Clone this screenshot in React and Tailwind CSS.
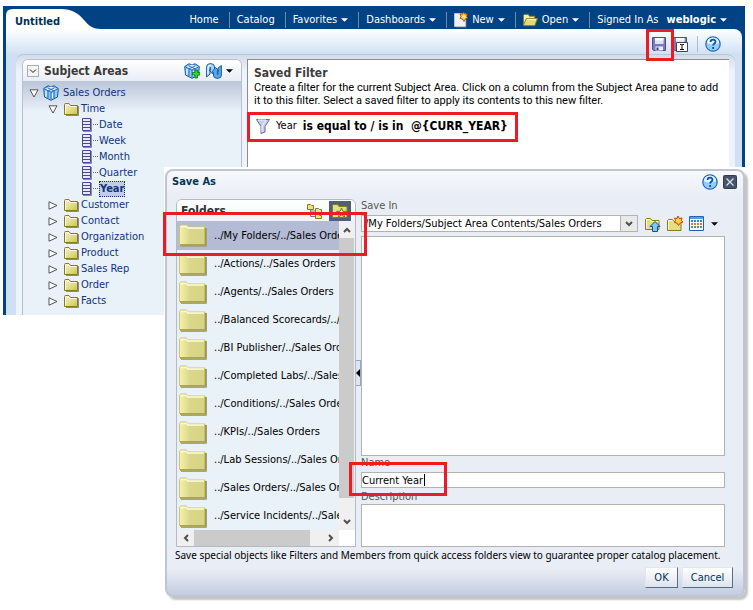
import React from "react";

const folders = [
  "../My Folders/../Sales Orders",
  "../Actions/../Sales Orders",
  "../Agents/../Sales Orders",
  "../Balanced Scorecards/../Sales Orders",
  "../BI Publisher/../Sales Orders",
  "../Completed Labs/../Sales Orders",
  "../Conditions/../Sales Orders",
  "../KPIs/../Sales Orders",
  "../Lab Sessions/../Sales Orders",
  "../Sales Orders/../Sales Orders",
  "../Service Incidents/../Sales Orders",
];

const columns = ["Date", "Week", "Month", "Quarter", "Year"];
const tables = ["Customer", "Contact", "Organization", "Product", "Sales Rep", "Order", "Facts"];

function Caret({ className = "" }) {
  return (
    <svg className={"h-1 w-[7px] shrink-0 " + className} viewBox="0 0 8 4" aria-hidden="true">
      <path d="M0 0h8L4 4z" fill="currentColor" />
    </svg>
  );
}

function FolderIcon() {
  return (
    <svg className="h-[14px] w-[15px] shrink-0" viewBox="0 0 15 14" aria-hidden="true">
      <defs>
        <linearGradient id="sf" x1="0" x2="1" y1="0" y2="1">
          <stop offset="0" stopColor="#fbf9b8" />
          <stop offset="1" stopColor="#c9c45c" />
        </linearGradient>
      </defs>
      <path d="M2 13.500h12.500V4" fill="none" stroke="#8a8a8a" />
      <path d="M.5 12.500v-10q0-1 1-1h3.500l1.500 2h7v9z" fill="url(#sf)" stroke="#8b7a1d" />
      <path d="M1.500 11.500v-9h3l1.500 2h6.500" fill="none" stroke="#fdfcd8" />
    </svg>
  );
}

function LargeFolder() {
  return (
    <svg className="h-[23px] w-[28px] shrink-0" viewBox="0 0 28 23" aria-hidden="true">
      <defs>
        <linearGradient id="lf" x1="0" x2="1">
          <stop offset="0" stopColor="#f5f3a9" />
          <stop offset=".4" stopColor="#d9d88a" />
          <stop offset="1" stopColor="#d6d486" />
        </linearGradient>
      </defs>
      <path d="M2 22.500h25.500V4" fill="none" stroke="#a2a2a0" />
      <path d="M.5 20.500v-18l1-1.500h6l1.500 2h17v18H1z" fill="url(#lf)" stroke="#cfc56e" />
      <path d="M1.500 2.500h6l1.500 1.500h16" fill="none" stroke="#fdfce0" strokeWidth="1.500" />
      <path d="M1 21h25.500V4" fill="none" stroke="#a3963e" strokeWidth="1.500" />
    </svg>
  );
}

function ColumnIcon() {
  return (
    <svg className="h-[14px] w-4 shrink-0" viewBox="0 0 16 14" aria-hidden="true">
      <path d="M9.500 1v12.500H1" stroke="#8a8aa0" fill="none" />
      <path d="M.5.5h8v12h-8z" fill="#f4f4ff" stroke="#4a4796" />
      <path d="M1 3.500h7M1 6.500h7M1 9.500h7" stroke="#4a4796" />
      <path d="M1 2h7M1 5h7M1 8h7M1 11h7" stroke="#c9c9ee" strokeWidth=".6" />
      <path d="M11 6.500h5" stroke="#666" strokeDasharray="1 1" />
    </svg>
  );
}

function CubeIcon({ plus }) {
  return (
    <svg className="h-4 w-4 shrink-0" viewBox="0 0 16 16" aria-hidden="true">
      <path d="M.7 3.500 5 .8l3 1 3-1 4.300 2.700L14.500 12 8 15.300 1.500 12z" fill="#8cc8f8" stroke="#1558ad" />
      <path d="M2 4l6-2.500L14 4 8 7z" fill="#e6f5ff" />
      <path d="M8 7v7.500M1.500 4 8 7l6.500-3M5 5.800v7.500M11 5.800v7.500M4.500 2.800l6.500 3M11.500 2.800l-6.500 3" stroke="#246cc0" fill="none" />
      <path d="M3 6v5.500M9.500 8v5" stroke="#fff" fill="none" />
      {plus && <path d="M8.500 9.500h2.500V7h2.500v2.500H16V12h-2.500v3H11v-3H8.500z" fill="#35d92a" stroke="#08780b" strokeWidth=".8" />}
    </svg>
  );
}

function RefreshIcon() {
  return (
    <svg className="h-4 w-4 shrink-0" viewBox="0 0 16 16" aria-hidden="true">
      <path d="M.6 14V4Q.6.700 4 .7h1q3.500 0 3.500 3.300v3h1.700L6.700 11 3 7h1.700V4.500H4V11z" fill="#a5d8fc" stroke="#1c5cab" />
      <path d="M15.400 2.500v9.500q0 3.300-3.400 3.300h-1q-3.500 0-3.500-3.300V9.500L6 9l3.500-4.500L13 8h-1.700v3.500h.7V5z" fill="#5aa7ee" stroke="#1c5cab" />
      <path d="M2 11V4.500Q2.300 2 4.500 2" stroke="#fff" fill="none" />
    </svg>
  );
}

function HelpIcon() {
  return (
    <svg className="h-4 w-4 shrink-0" viewBox="0 0 16 16" aria-hidden="true">
      <circle cx="8" cy="8" r="7.200" fill="#8fcffa" stroke="#2764b8" strokeWidth="1.200" />
      <path d="M2 7a6 5.500 0 0 1 12 0q-6 3-12 0" fill="#e4f5ff" />
      <path d="M5.600 6q0-2.300 2.500-2.300T10.500 6c0 1.500-2.400 1.600-2.400 3.600" fill="none" stroke="#0c4fae" strokeWidth="1.800" />
      <path d="M7.200 11h1.900v1.900H7.200z" fill="#0c4fae" />
    </svg>
  );
}

function SaveIcon({ rename }) {
  return (
    <svg className="h-4 w-4 shrink-0" viewBox="0 0 16 16" aria-hidden="true">
      <path d="M1.500 1.500h13v13h-12l-1-1z" fill="#7b7abc" stroke="#4c4c94" />
      <path d="M4 2h8.500v6H4z" fill="#dfe3f6" />
      <path d="M4 2h8.500v2.500H4z" fill="#f8f9ff" />
      <path d="M4.500 10.500h7.500v4H4.500z" fill="#eceefa" />
      <path d="M5.500 11.500h2V14h-2z" fill="#3c3c7c" />
      {rename && (
        <g>
          <path d="M4.500 6.500h11v9h-11z" fill="#fff" stroke="#444" />
          <path d="M8 8.500h1.500l.5.500.5-.5H12M10 9v5M8 13.500h4" stroke="#000" fill="none" />
        </g>
      )}
    </svg>
  );
}

function NewIcon() {
  return (
    <svg className="h-4 w-[14px] shrink-0" viewBox="0 0 14 16" aria-hidden="true">
      <path d="M.5 1.500h11v13H.5z" fill="#eef1fc" stroke="#b9bfdc" />
      <path d="M2 15.500h10.500V4" fill="none" stroke="#4a4f70" />
      <path d="m9.500 0 1.300 2.200L13.500 2l-.8 2.500L14 6l-2.500.8L10 9.500 8.500 7 6 6.500 7 4.500 6 2l2.500.2z" fill="#ffc92e" stroke="#8a3c0c" strokeWidth=".8" />
      <path d="M10 3v3.500M8.300 4.700h3.500" stroke="#fff6b0" />
    </svg>
  );
}

function OpenIcon() {
  return (
    <svg className="h-[14px] w-[15px] shrink-0" viewBox="0 0 16 14" aria-hidden="true">
      <path d="M.5 12.500V2l1-1h4l1.500 2h5.500v3" fill="#f5eea0" stroke="#8e7a24" />
      <path d="m.5 12.500 3-7h12l-3 7.500H1z" fill="#e2db7c" stroke="#8e7a24" />
      <path d="M4.500 6.500H14" stroke="#fffcc8" />
    </svg>
  );
}

function Twisty({ open }) {
  return (
    <svg className="h-[9px] w-[10px] shrink-0" viewBox="0 0 10 9" aria-hidden="true">
      {open ? (
        <path d="M1 .8h8L5 8z" fill="#fff" stroke="#555" />
      ) : (
        <path d="M1 .8v7.400L9 4.500z" fill="#fff" stroke="#555" />
      )}
    </svg>
  );
}

function Chevron({ d }) {
  return (
    <svg className="h-2 w-2" viewBox="0 0 8 8" aria-hidden="true">
      <path d={d} fill="none" stroke="#505050" strokeWidth="2" />
    </svg>
  );
}

function NavItem({ children, first }) {
  return (
    <li className={"flex h-4 items-center " + (first ? "" : "border-l border-[#6d8d9c]")}>
      <button type="button" className="flex items-center gap-1 whitespace-nowrap pl-[7px] pr-[10px]">{children}</button>
    </li>
  );
}

function Header() {
  return (
    <header className="flex h-[23px] items-stretch justify-between bg-[#004284]">
      <div className="relative ml-[3px] flex w-[95px] items-center pl-[9px] text-[#003057]">
        <svg className="absolute inset-0 h-full w-full" viewBox="0 0 95 23" preserveAspectRatio="none" aria-hidden="true">
          <path d="M0 23V9Q0 3 7 3h48c11 0 17 4 23 11 5 6 9 9 17 9z" fill="#fff" />
        </svg>
        <h1 className="relative pt-2 text-[11px] font-bold">Untitled</h1>
      </div>
      <nav className="flex items-center pr-2 pt-[5px] text-white" aria-label="Global">
        <ul className="flex items-center">
          <NavItem first>Home</NavItem>
          <NavItem>Catalog</NavItem>
          <NavItem>Favorites <Caret /></NavItem>
          <NavItem>Dashboards <Caret /></NavItem>
          <NavItem><NewIcon />New <Caret /></NavItem>
          <NavItem><OpenIcon />Open <Caret /></NavItem>
          <NavItem>Signed In As <b className="pl-1">weblogic</b><Caret /></NavItem>
        </ul>
      </nav>
    </header>
  );
}

function SubjectAreas() {
  return (
    <section className="w-[220px] shrink-0 overflow-hidden rounded-t-md border border-b-0 border-[#b9bfce] bg-[#e9f1f9]">
      <div className="flex h-[21px] items-center bg-gradient-to-b from-white to-[#e9edf5] pl-1 pr-2">
        <button type="button" aria-label="Collapse" className="flex h-3 w-3 items-center justify-center border border-[#a9adb5] bg-[#f4f4f4]">
          <svg className="h-2 w-2 shrink-0" viewBox="0 0 8 8" aria-hidden="true"><path d="m1 2.500 3 3 3-3" fill="none" stroke="#222" /></svg>
        </button>
        <h2 className="grow pl-[5px] text-[12px] font-bold text-[#3a3a3a]">Subject Areas</h2>
        <div className="flex items-center gap-1.5">
          <button type="button" aria-label="Add subject area"><CubeIcon plus /></button>
          <button type="button" aria-label="Refresh" className="flex items-center gap-1 text-black"><RefreshIcon /><Caret /></button>
        </div>
      </div>
      <ul className="bg-[linear-gradient(#b9c5d9,#e9f1f9_30px)] pt-1 leading-4 text-[#0d3580]">
        <li>
          <div className="flex h-4 items-center gap-1 pl-1.5"><Twisty open /><CubeIcon /><span>Sales Orders</span></div>
          <ul>
            <li>
              <div className="flex h-4 items-center pl-[25px]"><Twisty open /><span className="w-1.5" /><FolderIcon /><span className="pl-0.5">Time</span></div>
              <ul>
                {columns.map((c) => (
                  <li key={c} className="flex h-4 items-center gap-px pl-[59px]">
                    <ColumnIcon />
                    {c === "Year" ? (
                      <span className="border border-dotted border-[#0d3580] bg-[#c2cce2] font-bold leading-[14px]">{c}</span>
                    ) : (
                      <span>{c}</span>
                    )}
                  </li>
                ))}
              </ul>
            </li>
            {tables.map((t) => (
              <li key={t} className="flex h-4 items-center pl-[25px]"><Twisty /><span className="w-1.5" /><FolderIcon /><span className="pl-0.5">{t}</span></li>
            ))}
          </ul>
        </li>
      </ul>
    </section>
  );
}

function FilterPane() {
  return (
    <section className="min-w-0 grow border-l border-t border-[#8d8d8d] bg-white pl-1.5 pt-[5px] text-black">
      <h2 className="text-[12px] font-bold leading-4 text-[#3c3c3c]">Saved Filter</h2>
      <p className="whitespace-nowrap font-[Roboto,sans-serif] leading-[13px]">
        Create a filter for the current Subject Area. Click on a column from the Subject Area pane to add<br />
        it to this filter. Select a saved filter to apply its contents to this new filter.
      </p>
      <div className="mt-[7px] flex h-6 items-center text-[12px]">
        <svg className="ml-0.5 h-4 w-[14px] shrink-0" viewBox="0 0 14 16" aria-hidden="true">
          <path d="M.5 1.500h13L9 8.500V14l-4 1.500v-7z" fill="#c8cbed" stroke="#68699e" />
          <path d="M2 2h8L6 8v6" fill="none" stroke="#f7f7ff" />
        </svg>
        <span className="whitespace-pre pl-1.5 text-[11px]">Year</span>
        <b className="whitespace-pre pl-1.5">{"is equal to / is in  @{CURR_YEAR}"}</b>
      </div>
    </section>
  );
}

function AnswersWindow() {
  return (
    <main className="ml-[3px] mr-2 flex h-[309px] flex-col overflow-hidden bg-[#004284]">
      <Header />
      <div className="mx-[3px] flex min-h-0 grow flex-col rounded-tr-lg bg-[linear-gradient(#fff,#cfe0f3_26px)]">
        <div className="flex h-[25px] shrink-0 items-center justify-end gap-[5px] pr-[21px] pt-[5px]">
          <button type="button" aria-label="Save"><SaveIcon /></button>
          <button type="button" aria-label="Save as"><SaveIcon rename /></button>
          <div className="ml-1 mr-0.5 h-4 w-px bg-[#aebdce]" />
          <button type="button" aria-label="Help"><HelpIcon /></button>
        </div>
        <div className="ml-2.5 mr-[7px] flex min-h-0 grow gap-[5px] rounded-t-lg border-t border-[#b9c6da] bg-[linear-gradient(#d3dbea,#eef2fa_16px)] pl-1.5 pr-1.5 pt-1">
          <SubjectAreas />
          <FilterPane />
        </div>
      </div>
    </main>
  );
}

function FolderPanel() {
  return (
    <section className="flex w-[180px] shrink-0 flex-col overflow-hidden rounded-t-md border border-[#b4b9c8] bg-[#e9f1f9]">
      <div className="flex h-[21px] items-center justify-between bg-gradient-to-b from-white to-[#f1f3f8] pl-1 pr-1">
        <h3 className="text-[12px] font-bold text-[#333]">Folders</h3>
        <div className="flex">
          <button type="button" aria-label="Tree view" className="px-1.5">
            <svg className="h-4 w-4" viewBox="0 0 16 16" aria-hidden="true">
              <path d="M3.500 6v7.500h5M3.500 8h5" stroke="#777" fill="none" />
              <path d="M.5 1.500h3l1 1h2v4h-6zM8.500 5.500h3l1 1h2v3h-6zM8.500 11.500h3l1 1h2v3h-6z" fill="#ece37a" stroke="#8b7a1d" />
            </svg>
          </button>
          <button type="button" aria-label="Quick access" className="flex h-5 w-[22px] items-center justify-center bg-[#4f6078]">
            <svg className="h-4 w-4" viewBox="0 0 16 16" aria-hidden="true">
              <path d="M.5 14.500v-12l1-1h4l1.500 2h8v11z" fill="#e6df82" stroke="#8b7a1d" />
              <path d="m9.500 5 1.300 3.200 3.700.2-2.900 2.200 1 3.400-3.100-2-3.100 2 1-3.400-2.900-2.200 3.700-.2z" fill="#f7f58a" stroke="#6d7a10" />
            </svg>
          </button>
        </div>
      </div>
      <div className="flex">
        <ul className="w-[162px] shrink-0 overflow-hidden">
          {folders.map((f, i) => (
            <li key={f} className={"flex items-center gap-[7px] whitespace-nowrap pl-0.5 text-black " + (i === 0 ? "h-[29px] bg-[#b3bbd5]" : "h-7")}>
              <LargeFolder />
              <span>{f}</span>
            </li>
          ))}
        </ul>
        <div className="flex grow flex-col bg-[#f0f0f0]" aria-hidden="true">
          <div className="flex h-[17px] items-center justify-center"><Chevron d="M1 6l3-3 3 3" /></div>
          <div className="mr-px grow bg-[#cbcbcb]" />
          <div className="flex h-8 items-end justify-center pb-1"><Chevron d="M1 2l3 3 3-3" /></div>
        </div>
      </div>
      <div className="flex h-4 bg-white pr-4" aria-hidden="true">
        <div className="flex grow items-stretch bg-[#f0f0f0]">
          <div className="flex w-[17px] items-center justify-center"><Chevron d="M6 1 3 4l3 3" /></div>
          <div className="grow bg-[#cbcbcb]" />
          <div className="flex w-[29px] items-center justify-end pr-1"><Chevron d="M2 1l3 3-3 3" /></div>
        </div>
      </div>
    </section>
  );
}

function SaveForm() {
  return (
    <div className="flex min-w-0 grow flex-col pr-[17px] text-[#555]">
      <label htmlFor="savein" className="h-4 leading-[14px]">Save In</label>
      <div className="flex items-center">
        <div className="relative w-[277px]">
          <select id="savein" className="block h-[17px] w-full appearance-none border border-[#b3b3ae] bg-white pl-[3px] pr-5 leading-[14px] text-black">
            <option>/My Folders/Subject Area Contents/Sales Orders</option>
          </select>
          <span className="pointer-events-none absolute right-0 top-0 flex h-[17px] w-[18px] items-center justify-center border border-[#b3b3ae] bg-[#e9e9ea]">
            <Chevron d="M1 2l3 3 3-3" />
          </span>
        </div>
        <div className="flex items-center gap-1.5 pl-[7px]">
          <button type="button" aria-label="Up one folder">
            <svg className="h-4 w-4" viewBox="0 0 16 16" aria-hidden="true">
              <path d="M.5 13.500v-10l1-1h4l1.500 2h7v9z" fill="#e4dd82" stroke="#8b7a1d" />
              <path d="M1.500 12.500v-9h3.500l1.500 2h7" fill="none" stroke="#fdfcd0" />
              <path d="m10 5.500 5 5h-2.500v5h-5v-5H5z" fill="#7cc8f8" stroke="#104f9c" />
            </svg>
          </button>
          <button type="button" aria-label="New folder">
            <svg className="h-4 w-4" viewBox="0 0 16 16" aria-hidden="true">
              <path d="M.5 14.500v-10l1-1h4l1.500 2h7v9z" fill="#e4dd82" stroke="#8b7a1d" />
              <path d="M1.500 13.500v-9h3.500l1.500 2h7" fill="none" stroke="#fdfcd0" />
              <path d="m11 0 1.300 2.500L15 2l-.7 2.500L16 6l-2.500.8L11.500 9.500 10 7l-2.700-.5L8.500 4.500 7.500 2l2.500.5z" fill="#ffd338" stroke="#c0300c" strokeWidth=".9" />
            </svg>
          </button>
          <button type="button" aria-label="View options" className="flex items-center gap-1.5 text-black">
            <svg className="h-4 w-4" viewBox="0 0 16 16" aria-hidden="true">
              <path d="M.5.5h14v14H.5z" fill="#fff" stroke="#2660b4" />
              <path d="M1 2h13" stroke="#5b9be0" strokeWidth="2" />
              <path d="M2 5h11" stroke="#2d83dd" strokeWidth="2" strokeDasharray="2 1" />
              <path d="M2 8h11" stroke="#e17a3a" strokeWidth="2" strokeDasharray="2 1" />
              <path d="M2 11h11" stroke="#38a27a" strokeWidth="2" strokeDasharray="2 1" />
            </svg>
            <Caret />
          </button>
        </div>
      </div>
      <div className="mt-1 h-[220px] border border-[#b3b3ae] bg-white" />
      <label htmlFor="name" className="h-4 leading-[14px]">Name</label>
      <div className="relative">
        <input id="name" type="text" defaultValue="Current Year" className="block h-4 w-full border border-[#b3b3ae] bg-white text-black outline-none" />
        <span className="absolute left-[63px] top-0.5 h-3 w-px bg-black" aria-hidden="true" />
      </div>
      <label htmlFor="desc" className="h-4 pt-px leading-[16px]">Description</label>
      <textarea id="desc" className="block h-[43px] w-full resize-none border border-[#b3b3ae] bg-white text-black" />
    </div>
  );
}

function SaveDialog() {
  return (
    <div className="absolute left-[164px] right-[5px] top-[167px] bg-white pb-[5px] pl-px pr-[3px] pt-0.5">
      <div
        role="dialog"
        aria-label="Save As"
        className="rounded-lg border-2 border-[#c0c5d4] bg-[linear-gradient(#f6f8fb,#e9edf5_26px,#e9edf5_calc(100%-26px),#c3cde0)] pb-[7px] pl-[9px] pr-px shadow-[3px_3px_2px_#c4c4c4]"
      >
        <div className="flex h-7 items-center justify-between pb-1.5 pr-1">
          <h2 className="-ml-1 text-[11px] font-bold text-[#003653]">Save As</h2>
          <div className="flex gap-1">
            <button type="button" aria-label="Help"><HelpIcon /></button>
            <button type="button" aria-label="Close">
              <svg className="h-4 w-4" viewBox="0 0 16 16" aria-hidden="true">
                <rect x="1.500" y="1.500" width="13" height="13" rx="1" fill="#46546a" stroke="#303c50" />
                <path d="m4.500 4.500 7 7M11.500 4.500l-7 7" stroke="#d8dde8" strokeWidth="1.300" />
              </svg>
            </button>
          </div>
        </div>
        <div className="flex">
          <FolderPanel />
          <div className="flex w-[5px] shrink-0 items-center">
            <button type="button" aria-label="Collapse folders" className="flex h-[26px] w-[5px] items-center border-y border-r border-[#93a7cb] bg-[#dbe5f4]">
              <svg className="h-2 w-1" viewBox="0 0 4 8" aria-hidden="true"><path d="M4 0v8L0 4z" fill="#000" /></svg>
            </button>
          </div>
          <SaveForm />
        </div>
        <p className="-ml-px whitespace-nowrap font-['Noto_Sans',sans-serif] text-[10px] leading-4 text-black">
          Save special objects like Filters and Members from quick access folders view to guarantee proper catalog placement.
        </p>
        <div className="mt-1 flex justify-end gap-1 pr-[9px] text-[#00355a]">
          <button type="button" className="h-[21px] w-[33px] border border-b-[#5b6b84] border-l-[#e3e6ec] border-r-[#5b6b84] border-t-[#e3e6ec] bg-gradient-to-b from-white to-[#dde4ef]">OK</button>
          <button type="button" className="h-[21px] w-[51px] border border-b-[#5b6b84] border-l-[#e3e6ec] border-r-[#5b6b84] border-t-[#e3e6ec] bg-gradient-to-b from-white to-[#dde4ef]">Cancel</button>
        </div>
      </div>
    </div>
  );
}

export default function App() {
  return (
    <div className="relative min-h-screen bg-white pt-[6px] font-['DejaVu_Sans_Condensed',Tahoma,'DejaVu_Sans',sans-serif] text-[11px] leading-[14px]">
      <AnswersWindow />
      <SaveDialog />
      <div className="pointer-events-none absolute left-[646px] top-[29px] h-8 w-7 border-[3px] border-[#ed1c24]" />
      <div className="pointer-events-none absolute left-[247px] top-[112px] h-[30px] w-[271px] border-[3px] border-[#ed1c24]" />
      <div className="pointer-events-none absolute left-[163px] top-[212px] h-11 w-[204px] border-[3px] border-[#ed1c24]" />
      <div className="pointer-events-none absolute left-[349px] top-[462px] h-[34px] w-[98px] border-[3px] border-[#ed1c24]" />
    </div>
  );
}
